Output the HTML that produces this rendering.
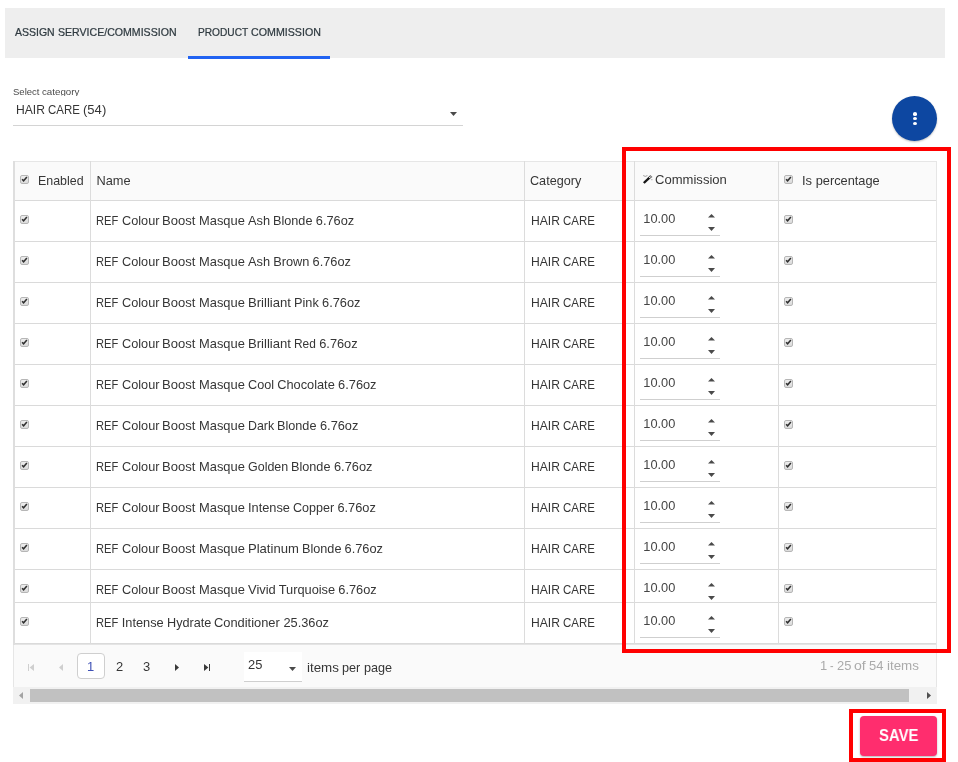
<!DOCTYPE html>
<html><head><meta charset="utf-8"><title>Product Commission</title>
<style>
html,body{margin:0;padding:0;background:#fff;}
#w{position:absolute;left:0;top:0;width:958px;height:762px;will-change:transform;}
body{width:958px;height:762px;overflow:hidden;position:relative;font-family:"Liberation Sans",sans-serif;font-size:13px;color:#363636;}
.a{position:absolute;}
.t{position:absolute;white-space:pre;line-height:16px;height:16px;font-size:12.8px;}
.w{position:absolute;top:0;transform-origin:0 0;}
.tabbar{left:5px;top:8px;width:940px;height:50px;background:#eeeeee;}
.tab{font-size:11px;font-weight:normal;color:#2f3a40;top:24px;-webkit-text-stroke:0.24px #2f3a40;}
.ink{left:188px;top:56px;width:142px;height:3px;background:#2163f2;}
.hl{background:#dadada;height:1px;}
.vl{background:#dcdcdc;width:1px;}
.cb{position:absolute;width:7px;height:7px;border:1px solid #b6b6b6;border-radius:2px;background:linear-gradient(#ededed,#dbdbdb);}
.cb svg{position:absolute;left:0;top:0;width:7px;height:7px;overflow:visible;}
.row{position:absolute;left:14px;width:922px;height:41px;overflow:hidden;}
.ul{position:absolute;left:626px;top:35px;width:80px;height:1px;background:#cfcfcf;}
.up{position:absolute;left:694px;top:14px;width:7px;height:3.5px;}
.dn{position:absolute;left:694px;top:27px;width:7px;height:4px;}
.red{position:absolute;border:4px solid #ff0000;box-sizing:border-box;}
</style></head>
<body>
<div id="w">
<div class="a tabbar"></div>
<span class="t tab" style="left:15.2px;top:24px;font-size:11.2px;"><span class="w" style="left:0.00px;transform:scaleX(0.9390)">ASSIGN </span><span class="w" style="left:42.48px;transform:scaleX(0.9454)">SERVICE/COMMISSION</span></span>
<span class="t tab" style="left:197.8px;top:24px;font-size:11.17px;"><span class="w" style="left:0.00px;transform:scaleX(0.9110)">PRODUCT </span><span class="w" style="left:52.86px;transform:scaleX(0.9560)">COMMISSION</span></span>
<div class="a ink"></div>
<div class="a" style="left:13px;top:84px;width:80px;height:12px;overflow:hidden"><span class="t" style="left:0px;top:2px;font-size:9.63px;line-height:12px;color:#4a4a4a;"><span class="w" style="left:0.00px;transform:scaleX(0.9883)">Select </span><span class="w" style="left:28.84px;transform:scaleX(1.0110)">category</span></span></div>
<span class="t" style="left:16.3px;top:102px;"><span class="w" style="left:0.00px;transform:scaleX(0.9474)">HAIR </span><span class="w" style="left:32.16px;transform:scaleX(0.8954)">CARE </span><span class="w" style="left:67.19px;transform:scaleX(1.0206)">(54)</span></span>
<div class="a" style="left:13px;top:125px;width:450px;height:1px;background:#d4d4d4"></div>
<svg class="a" style="left:450px;top:112px;width:7px;height:4px" viewBox="0 0 7 4"><path d="M0 0 L7 0 L3.5 4 Z" fill="#4a4a4a"/></svg>
<div class="a" style="left:892px;top:96px;width:45px;height:45px;border-radius:50%;background:#0d47a1;box-shadow:0 1px 2px rgba(0,0,0,0.25)"></div>
<div class="a" style="left:912.7px;top:112.35px;width:4.2px;height:3.3px;border-radius:50%;background:#fff"></div>
<div class="a" style="left:912.7px;top:117.05px;width:4.2px;height:3.3px;border-radius:50%;background:#fff"></div>
<div class="a" style="left:912.7px;top:121.75px;width:4.2px;height:3.3px;border-radius:50%;background:#fff"></div>
<div class="a" style="left:13px;top:161px;width:924px;height:543px;background:#fff"></div>
<div class="a" style="left:14px;top:162px;width:922px;height:38px;background:#fafafa"></div>
<div class="a" style="left:14px;top:644px;width:922px;height:43px;background:#fafafa"></div>
<div class="row" style="top:200px;height:41px"><span class="cb" style="left:6px;top:15px"><svg viewBox="0 0 7 7"><path d="M1.1 3.2 L2.6 4.8 L5.9 1.1" fill="none" stroke="#303030" stroke-width="1.55"/></svg></span><span class="t" style="left:82.3px;top:13px;"><span class="w" style="left:0.00px;transform:scaleX(0.8682)">REF </span><span class="w" style="left:25.42px;transform:scaleX(0.9930)">Colour </span><span class="w" style="left:66.05px;transform:scaleX(1.0196)">Boost </span><span class="w" style="left:102.61px;transform:scaleX(1.0072)">Masque </span><span class="w" style="left:151.66px">Ash </span><span class="w" style="left:176.86px;transform:scaleX(0.9898)">Blonde </span><span class="w" style="left:219.50px">6.76oz</span></span><span class="t" style="left:516.5px;top:13px;"><span class="w" style="left:0.00px;transform:scaleX(0.9474)">HAIR </span><span class="w" style="left:32.16px;transform:scaleX(0.8954)">CARE</span></span><span class="t" style="left:629.3px;top:11px;color:#454545;"><span class="w" style="left:0.00px">10.00</span></span><i class="ul"></i><svg class="up" viewBox="0 0 7 4" preserveAspectRatio="none"><path d="M0 4 L3.5 0 L7 4 Z" fill="#4a4a4a"/></svg><svg class="dn" viewBox="0 0 7 4"><path d="M0 0 L7 0 L3.5 4 Z" fill="#4a4a4a"/></svg><span class="cb" style="left:770px;top:15px"><svg viewBox="0 0 7 7"><path d="M1.1 3.2 L2.6 4.8 L5.9 1.1" fill="none" stroke="#303030" stroke-width="1.55"/></svg></span></div>
<div class="row" style="top:241px;height:41px"><span class="cb" style="left:6px;top:15px"><svg viewBox="0 0 7 7"><path d="M1.1 3.2 L2.6 4.8 L5.9 1.1" fill="none" stroke="#303030" stroke-width="1.55"/></svg></span><span class="t" style="left:82.3px;top:13px;"><span class="w" style="left:0.00px;transform:scaleX(0.8682)">REF </span><span class="w" style="left:25.42px;transform:scaleX(0.9930)">Colour </span><span class="w" style="left:66.05px;transform:scaleX(1.0196)">Boost </span><span class="w" style="left:102.61px;transform:scaleX(1.0072)">Masque </span><span class="w" style="left:151.66px">Ash </span><span class="w" style="left:176.86px">Brown </span><span class="w" style="left:216.22px">6.76oz</span></span><span class="t" style="left:516.5px;top:13px;"><span class="w" style="left:0.00px;transform:scaleX(0.9474)">HAIR </span><span class="w" style="left:32.16px;transform:scaleX(0.8954)">CARE</span></span><span class="t" style="left:629.3px;top:11px;color:#454545;"><span class="w" style="left:0.00px">10.00</span></span><i class="ul"></i><svg class="up" viewBox="0 0 7 4" preserveAspectRatio="none"><path d="M0 4 L3.5 0 L7 4 Z" fill="#4a4a4a"/></svg><svg class="dn" viewBox="0 0 7 4"><path d="M0 0 L7 0 L3.5 4 Z" fill="#4a4a4a"/></svg><span class="cb" style="left:770px;top:15px"><svg viewBox="0 0 7 7"><path d="M1.1 3.2 L2.6 4.8 L5.9 1.1" fill="none" stroke="#303030" stroke-width="1.55"/></svg></span></div>
<div class="row" style="top:282px;height:41px"><span class="cb" style="left:6px;top:15px"><svg viewBox="0 0 7 7"><path d="M1.1 3.2 L2.6 4.8 L5.9 1.1" fill="none" stroke="#303030" stroke-width="1.55"/></svg></span><span class="t" style="left:82.3px;top:13px;"><span class="w" style="left:0.00px;transform:scaleX(0.8682)">REF </span><span class="w" style="left:25.42px;transform:scaleX(0.9930)">Colour </span><span class="w" style="left:66.05px;transform:scaleX(1.0196)">Boost </span><span class="w" style="left:102.61px;transform:scaleX(1.0072)">Masque </span><span class="w" style="left:151.66px;transform:scaleX(1.0242)">Brilliant </span><span class="w" style="left:197.83px;transform:scaleX(0.9937)">Pink </span><span class="w" style="left:225.77px">6.76oz</span></span><span class="t" style="left:516.5px;top:13px;"><span class="w" style="left:0.00px;transform:scaleX(0.9474)">HAIR </span><span class="w" style="left:32.16px;transform:scaleX(0.8954)">CARE</span></span><span class="t" style="left:629.3px;top:11px;color:#454545;"><span class="w" style="left:0.00px">10.00</span></span><i class="ul"></i><svg class="up" viewBox="0 0 7 4" preserveAspectRatio="none"><path d="M0 4 L3.5 0 L7 4 Z" fill="#4a4a4a"/></svg><svg class="dn" viewBox="0 0 7 4"><path d="M0 0 L7 0 L3.5 4 Z" fill="#4a4a4a"/></svg><span class="cb" style="left:770px;top:15px"><svg viewBox="0 0 7 7"><path d="M1.1 3.2 L2.6 4.8 L5.9 1.1" fill="none" stroke="#303030" stroke-width="1.55"/></svg></span></div>
<div class="row" style="top:323px;height:41px"><span class="cb" style="left:6px;top:15px"><svg viewBox="0 0 7 7"><path d="M1.1 3.2 L2.6 4.8 L5.9 1.1" fill="none" stroke="#303030" stroke-width="1.55"/></svg></span><span class="t" style="left:82.3px;top:13px;"><span class="w" style="left:0.00px;transform:scaleX(0.8682)">REF </span><span class="w" style="left:25.42px;transform:scaleX(0.9930)">Colour </span><span class="w" style="left:66.05px;transform:scaleX(1.0196)">Boost </span><span class="w" style="left:102.61px;transform:scaleX(1.0072)">Masque </span><span class="w" style="left:151.66px;transform:scaleX(1.0242)">Brilliant </span><span class="w" style="left:197.83px;transform:scaleX(0.9321)">Red </span><span class="w" style="left:222.91px">6.76oz</span></span><span class="t" style="left:516.5px;top:13px;"><span class="w" style="left:0.00px;transform:scaleX(0.9474)">HAIR </span><span class="w" style="left:32.16px;transform:scaleX(0.8954)">CARE</span></span><span class="t" style="left:629.3px;top:11px;color:#454545;"><span class="w" style="left:0.00px">10.00</span></span><i class="ul"></i><svg class="up" viewBox="0 0 7 4" preserveAspectRatio="none"><path d="M0 4 L3.5 0 L7 4 Z" fill="#4a4a4a"/></svg><svg class="dn" viewBox="0 0 7 4"><path d="M0 0 L7 0 L3.5 4 Z" fill="#4a4a4a"/></svg><span class="cb" style="left:770px;top:15px"><svg viewBox="0 0 7 7"><path d="M1.1 3.2 L2.6 4.8 L5.9 1.1" fill="none" stroke="#303030" stroke-width="1.55"/></svg></span></div>
<div class="row" style="top:364px;height:41px"><span class="cb" style="left:6px;top:15px"><svg viewBox="0 0 7 7"><path d="M1.1 3.2 L2.6 4.8 L5.9 1.1" fill="none" stroke="#303030" stroke-width="1.55"/></svg></span><span class="t" style="left:82.3px;top:13px;"><span class="w" style="left:0.00px;transform:scaleX(0.8682)">REF </span><span class="w" style="left:25.42px;transform:scaleX(0.9930)">Colour </span><span class="w" style="left:66.05px;transform:scaleX(1.0196)">Boost </span><span class="w" style="left:102.61px;transform:scaleX(1.0072)">Masque </span><span class="w" style="left:151.66px;transform:scaleX(0.9893)">Cool </span><span class="w" style="left:180.89px">Chocolate </span><span class="w" style="left:241.80px">6.76oz</span></span><span class="t" style="left:516.5px;top:13px;"><span class="w" style="left:0.00px;transform:scaleX(0.9474)">HAIR </span><span class="w" style="left:32.16px;transform:scaleX(0.8954)">CARE</span></span><span class="t" style="left:629.3px;top:11px;color:#454545;"><span class="w" style="left:0.00px">10.00</span></span><i class="ul"></i><svg class="up" viewBox="0 0 7 4" preserveAspectRatio="none"><path d="M0 4 L3.5 0 L7 4 Z" fill="#4a4a4a"/></svg><svg class="dn" viewBox="0 0 7 4"><path d="M0 0 L7 0 L3.5 4 Z" fill="#4a4a4a"/></svg><span class="cb" style="left:770px;top:15px"><svg viewBox="0 0 7 7"><path d="M1.1 3.2 L2.6 4.8 L5.9 1.1" fill="none" stroke="#303030" stroke-width="1.55"/></svg></span></div>
<div class="row" style="top:405px;height:41px"><span class="cb" style="left:6px;top:15px"><svg viewBox="0 0 7 7"><path d="M1.1 3.2 L2.6 4.8 L5.9 1.1" fill="none" stroke="#303030" stroke-width="1.55"/></svg></span><span class="t" style="left:82.3px;top:13px;"><span class="w" style="left:0.00px;transform:scaleX(0.8682)">REF </span><span class="w" style="left:25.42px;transform:scaleX(0.9930)">Colour </span><span class="w" style="left:66.05px;transform:scaleX(1.0196)">Boost </span><span class="w" style="left:102.61px;transform:scaleX(1.0072)">Masque </span><span class="w" style="left:151.66px;transform:scaleX(0.9688)">Dark </span><span class="w" style="left:181.03px;transform:scaleX(0.9898)">Blonde </span><span class="w" style="left:223.67px">6.76oz</span></span><span class="t" style="left:516.5px;top:13px;"><span class="w" style="left:0.00px;transform:scaleX(0.9474)">HAIR </span><span class="w" style="left:32.16px;transform:scaleX(0.8954)">CARE</span></span><span class="t" style="left:629.3px;top:11px;color:#454545;"><span class="w" style="left:0.00px">10.00</span></span><i class="ul"></i><svg class="up" viewBox="0 0 7 4" preserveAspectRatio="none"><path d="M0 4 L3.5 0 L7 4 Z" fill="#4a4a4a"/></svg><svg class="dn" viewBox="0 0 7 4"><path d="M0 0 L7 0 L3.5 4 Z" fill="#4a4a4a"/></svg><span class="cb" style="left:770px;top:15px"><svg viewBox="0 0 7 7"><path d="M1.1 3.2 L2.6 4.8 L5.9 1.1" fill="none" stroke="#303030" stroke-width="1.55"/></svg></span></div>
<div class="row" style="top:446px;height:41px"><span class="cb" style="left:6px;top:15px"><svg viewBox="0 0 7 7"><path d="M1.1 3.2 L2.6 4.8 L5.9 1.1" fill="none" stroke="#303030" stroke-width="1.55"/></svg></span><span class="t" style="left:82.3px;top:13px;"><span class="w" style="left:0.00px;transform:scaleX(0.8682)">REF </span><span class="w" style="left:25.42px;transform:scaleX(0.9930)">Colour </span><span class="w" style="left:66.05px;transform:scaleX(1.0196)">Boost </span><span class="w" style="left:102.61px;transform:scaleX(1.0072)">Masque </span><span class="w" style="left:151.66px;transform:scaleX(0.9743)">Golden </span><span class="w" style="left:195.05px;transform:scaleX(0.9898)">Blonde </span><span class="w" style="left:237.69px">6.76oz</span></span><span class="t" style="left:516.5px;top:13px;"><span class="w" style="left:0.00px;transform:scaleX(0.9474)">HAIR </span><span class="w" style="left:32.16px;transform:scaleX(0.8954)">CARE</span></span><span class="t" style="left:629.3px;top:11px;color:#454545;"><span class="w" style="left:0.00px">10.00</span></span><i class="ul"></i><svg class="up" viewBox="0 0 7 4" preserveAspectRatio="none"><path d="M0 4 L3.5 0 L7 4 Z" fill="#4a4a4a"/></svg><svg class="dn" viewBox="0 0 7 4"><path d="M0 0 L7 0 L3.5 4 Z" fill="#4a4a4a"/></svg><span class="cb" style="left:770px;top:15px"><svg viewBox="0 0 7 7"><path d="M1.1 3.2 L2.6 4.8 L5.9 1.1" fill="none" stroke="#303030" stroke-width="1.55"/></svg></span></div>
<div class="row" style="top:487px;height:41px"><span class="cb" style="left:6px;top:15px"><svg viewBox="0 0 7 7"><path d="M1.1 3.2 L2.6 4.8 L5.9 1.1" fill="none" stroke="#303030" stroke-width="1.55"/></svg></span><span class="t" style="left:82.3px;top:13px;"><span class="w" style="left:0.00px;transform:scaleX(0.8682)">REF </span><span class="w" style="left:25.42px;transform:scaleX(0.9930)">Colour </span><span class="w" style="left:66.05px;transform:scaleX(1.0196)">Boost </span><span class="w" style="left:102.61px;transform:scaleX(1.0072)">Masque </span><span class="w" style="left:151.66px">Intense </span><span class="w" style="left:196.83px;transform:scaleX(0.9795)">Copper </span><span class="w" style="left:241.14px">6.76oz</span></span><span class="t" style="left:516.5px;top:13px;"><span class="w" style="left:0.00px;transform:scaleX(0.9474)">HAIR </span><span class="w" style="left:32.16px;transform:scaleX(0.8954)">CARE</span></span><span class="t" style="left:629.3px;top:11px;color:#454545;"><span class="w" style="left:0.00px">10.00</span></span><i class="ul"></i><svg class="up" viewBox="0 0 7 4" preserveAspectRatio="none"><path d="M0 4 L3.5 0 L7 4 Z" fill="#4a4a4a"/></svg><svg class="dn" viewBox="0 0 7 4"><path d="M0 0 L7 0 L3.5 4 Z" fill="#4a4a4a"/></svg><span class="cb" style="left:770px;top:15px"><svg viewBox="0 0 7 7"><path d="M1.1 3.2 L2.6 4.8 L5.9 1.1" fill="none" stroke="#303030" stroke-width="1.55"/></svg></span></div>
<div class="row" style="top:528px;height:41px"><span class="cb" style="left:6px;top:15px"><svg viewBox="0 0 7 7"><path d="M1.1 3.2 L2.6 4.8 L5.9 1.1" fill="none" stroke="#303030" stroke-width="1.55"/></svg></span><span class="t" style="left:82.3px;top:13px;"><span class="w" style="left:0.00px;transform:scaleX(0.8682)">REF </span><span class="w" style="left:25.42px;transform:scaleX(0.9930)">Colour </span><span class="w" style="left:66.05px;transform:scaleX(1.0196)">Boost </span><span class="w" style="left:102.61px;transform:scaleX(1.0072)">Masque </span><span class="w" style="left:151.66px;transform:scaleX(1.0201)">Platinum </span><span class="w" style="left:205.64px;transform:scaleX(0.9898)">Blonde </span><span class="w" style="left:248.28px">6.76oz</span></span><span class="t" style="left:516.5px;top:13px;"><span class="w" style="left:0.00px;transform:scaleX(0.9474)">HAIR </span><span class="w" style="left:32.16px;transform:scaleX(0.8954)">CARE</span></span><span class="t" style="left:629.3px;top:11px;color:#454545;"><span class="w" style="left:0.00px">10.00</span></span><i class="ul"></i><svg class="up" viewBox="0 0 7 4" preserveAspectRatio="none"><path d="M0 4 L3.5 0 L7 4 Z" fill="#4a4a4a"/></svg><svg class="dn" viewBox="0 0 7 4"><path d="M0 0 L7 0 L3.5 4 Z" fill="#4a4a4a"/></svg><span class="cb" style="left:770px;top:15px"><svg viewBox="0 0 7 7"><path d="M1.1 3.2 L2.6 4.8 L5.9 1.1" fill="none" stroke="#303030" stroke-width="1.55"/></svg></span></div>
<div class="row" style="top:569px;height:33px"><span class="cb" style="left:6px;top:15px"><svg viewBox="0 0 7 7"><path d="M1.1 3.2 L2.6 4.8 L5.9 1.1" fill="none" stroke="#303030" stroke-width="1.55"/></svg></span><span class="t" style="left:82.3px;top:13px;"><span class="w" style="left:0.00px;transform:scaleX(0.8682)">REF </span><span class="w" style="left:25.42px;transform:scaleX(0.9930)">Colour </span><span class="w" style="left:66.05px;transform:scaleX(1.0196)">Boost </span><span class="w" style="left:102.61px;transform:scaleX(1.0072)">Masque </span><span class="w" style="left:151.66px;transform:scaleX(1.0102)">Vivid </span><span class="w" style="left:182.39px">Turquoise </span><span class="w" style="left:242.03px">6.76oz</span></span><span class="t" style="left:516.5px;top:13px;"><span class="w" style="left:0.00px;transform:scaleX(0.9474)">HAIR </span><span class="w" style="left:32.16px;transform:scaleX(0.8954)">CARE</span></span><span class="t" style="left:629.3px;top:11px;color:#454545;"><span class="w" style="left:0.00px">10.00</span></span><i class="ul"></i><svg class="up" viewBox="0 0 7 4" preserveAspectRatio="none"><path d="M0 4 L3.5 0 L7 4 Z" fill="#4a4a4a"/></svg><svg class="dn" viewBox="0 0 7 4"><path d="M0 0 L7 0 L3.5 4 Z" fill="#4a4a4a"/></svg><span class="cb" style="left:770px;top:15px"><svg viewBox="0 0 7 7"><path d="M1.1 3.2 L2.6 4.8 L5.9 1.1" fill="none" stroke="#303030" stroke-width="1.55"/></svg></span></div>
<div class="row" style="top:602px;height:41px"><span class="cb" style="left:6px;top:15px"><svg viewBox="0 0 7 7"><path d="M1.1 3.2 L2.6 4.8 L5.9 1.1" fill="none" stroke="#303030" stroke-width="1.55"/></svg></span><span class="t" style="left:82.3px;top:13px;"><span class="w" style="left:0.00px;transform:scaleX(0.8682)">REF </span><span class="w" style="left:25.42px">Intense </span><span class="w" style="left:70.59px;transform:scaleX(0.9895)">Hydrate </span><span class="w" style="left:118.12px;transform:scaleX(1.0055)">Conditioner </span><span class="w" style="left:187.12px">25.36oz</span></span><span class="t" style="left:516.5px;top:13px;"><span class="w" style="left:0.00px;transform:scaleX(0.9474)">HAIR </span><span class="w" style="left:32.16px;transform:scaleX(0.8954)">CARE</span></span><span class="t" style="left:629.3px;top:11px;color:#454545;"><span class="w" style="left:0.00px">10.00</span></span><i class="ul"></i><svg class="up" viewBox="0 0 7 4" preserveAspectRatio="none"><path d="M0 4 L3.5 0 L7 4 Z" fill="#4a4a4a"/></svg><svg class="dn" viewBox="0 0 7 4"><path d="M0 0 L7 0 L3.5 4 Z" fill="#4a4a4a"/></svg><span class="cb" style="left:770px;top:15px"><svg viewBox="0 0 7 7"><path d="M1.1 3.2 L2.6 4.8 L5.9 1.1" fill="none" stroke="#303030" stroke-width="1.55"/></svg></span></div>
<div class="a" style="left:13px;top:161px;width:924px;height:1px;background:#e6e6e6"></div>
<div class="a hl" style="left:13px;top:200px;width:924px"></div>
<div class="a hl" style="left:13px;top:241px;width:924px"></div>
<div class="a hl" style="left:13px;top:282px;width:924px"></div>
<div class="a hl" style="left:13px;top:323px;width:924px"></div>
<div class="a hl" style="left:13px;top:364px;width:924px"></div>
<div class="a hl" style="left:13px;top:405px;width:924px"></div>
<div class="a hl" style="left:13px;top:446px;width:924px"></div>
<div class="a hl" style="left:13px;top:487px;width:924px"></div>
<div class="a hl" style="left:13px;top:528px;width:924px"></div>
<div class="a hl" style="left:13px;top:569px;width:924px"></div>
<div class="a hl" style="left:13px;top:602px;width:924px"></div>
<div class="a hl" style="left:13px;top:643px;width:924px"></div>
<div class="a" style="left:13px;top:644px;width:924px;height:1px;background:#e4e4e4"></div>
<div class="a vl" style="left:90px;top:161px;height:483px"></div>
<div class="a vl" style="left:524px;top:161px;height:483px"></div>
<div class="a vl" style="left:634px;top:161px;height:483px"></div>
<div class="a vl" style="left:778px;top:161px;height:483px"></div>
<div class="a" style="left:13px;top:161px;width:2px;height:484px;background:#dedede"></div><div class="a" style="left:13px;top:645px;width:1px;height:42px;background:#e6e6e6"></div>
<div class="a" style="left:936px;top:161px;width:1px;height:526px;background:#e6e6e6"></div>
<span class="cb" style="left:20px;top:175px"><svg viewBox="0 0 7 7"><path d="M1.1 3.2 L2.6 4.8 L5.9 1.1" fill="none" stroke="#303030" stroke-width="1.55"/></svg></span><span class="t" style="left:38.4px;top:173px;"><span class="w" style="left:0.00px;transform:scaleX(0.9711)">Enabled</span></span>
<span class="t" style="left:96.4px;top:173px;"><span class="w" style="left:0.00px">Name</span></span>
<span class="t" style="left:530.3px;top:173px;"><span class="w" style="left:0.00px;transform:scaleX(0.9871)">Category</span></span>
<svg class="a" style="left:642px;top:174px;width:12px;height:11px" viewBox="0 0 12 11"><path d="M1.8 9 L9.1 2.1" stroke="#161616" stroke-width="2.4" fill="none"/><path d="M7.2 3.9 L8.7 2.5" stroke="#f4f4f4" stroke-width="1.1" fill="none"/><path d="M1.2 1.5 L3.2 2.4 L5.4 1.6" stroke="#7a7a7a" stroke-width="0.7" fill="none"/><path d="M8.9 5.7 L10.6 5.7 M9.4 2.2 L10.4 2.9" stroke="#8a8a8a" stroke-width="0.6" fill="none"/></svg>
<span class="t" style="left:655.1px;top:172px;"><span class="w" style="left:0.00px;transform:scaleX(1.0209)">Commission</span></span>
<span class="cb" style="left:784px;top:175px"><svg viewBox="0 0 7 7"><path d="M1.1 3.2 L2.6 4.8 L5.9 1.1" fill="none" stroke="#303030" stroke-width="1.55"/></svg></span><span class="t" style="left:802.4px;top:173px;"><span class="w" style="left:0.00px;transform:scaleX(1.0125)">Is </span><span class="w" style="left:13.28px">percentage</span></span>
<svg class="a" style="left:28px;top:664px;width:6px;height:7px" viewBox="0 0 6 7"><path d="M0 0 H1 V7 H0 Z M6 0 V7 L1.6 3.5 Z" fill="#cfcfcf"/></svg>
<svg class="a" style="left:59px;top:664px;width:4px;height:7px" viewBox="0 0 4 7"><path d="M4 0 V7 L0 3.5 Z" fill="#cfcfcf"/></svg>
<div class="a" style="left:77px;top:653px;width:28px;height:26px;box-sizing:border-box;border:1px solid #cfcfcf;border-radius:4px;background:#fff"></div>
<span class="t" style="left:87px;top:659px;color:#3f51b5;"><span class="w" style="left:0.00px;transform:scaleX(1.0110)">1</span></span>
<span class="t" style="left:115.5px;top:659px;"><span class="w" style="left:0.00px;transform:scaleX(1.0110)">2</span></span>
<span class="t" style="left:143px;top:659px;"><span class="w" style="left:0.00px;transform:scaleX(1.0110)">3</span></span>
<svg class="a" style="left:175px;top:664px;width:4px;height:7px" viewBox="0 0 4 7"><path d="M0 0 V7 L4 3.5 Z" fill="#3a3a3a"/></svg>
<svg class="a" style="left:204px;top:664px;width:6px;height:7px" viewBox="0 0 6 7"><path d="M5 0 H6 V7 H5 Z M0 0 V7 L4.4 3.5 Z" fill="#3a3a3a"/></svg>
<div class="a" style="left:244px;top:652px;width:58px;height:29px;background:#fff"></div>
<div class="a" style="left:244px;top:681px;width:58px;height:1px;background:#cfcfcf"></div>
<span class="t" style="left:247.9px;top:657px;"><span class="w" style="left:0.00px;transform:scaleX(1.0110)">25</span></span>
<svg class="a" style="left:289px;top:667px;width:7px;height:4px" viewBox="0 0 7 4"><path d="M0 0 L7 0 L3.5 4 Z" fill="#4a4a4a"/></svg>
<span class="t" style="left:307.0px;top:660px;"><span class="w" style="left:0.00px;transform:scaleX(1.0439)">items </span><span class="w" style="left:35.11px;transform:scaleX(0.9899)">per </span><span class="w" style="left:56.61px;transform:scaleX(0.9879)">page</span></span>
<span class="t" style="left:819.8px;top:658px;color:#aaaaaa;"><span class="w" style="left:0.00px;transform:scaleX(1.0110)">1 </span><span class="w" style="left:10.39px;transform:scaleX(0.8315)">- </span><span class="w" style="left:17.12px;transform:scaleX(1.0110)">25 </span><span class="w" style="left:34.70px;transform:scaleX(1.0994)">of </span><span class="w" style="left:49.64px;transform:scaleX(1.0110)">54 </span><span class="w" style="left:67.22px;transform:scaleX(1.0439)">items</span></span>
<div class="a" style="left:13px;top:687px;width:924px;height:17px;background:#f1f1f1"></div>
<div class="a" style="left:30px;top:689px;width:879px;height:13px;background:#c1c1c1"></div>
<svg class="a" style="left:19px;top:692px;width:4px;height:7px" viewBox="0 0 4 7"><path d="M4 0 V7 L0 3.5 Z" fill="#a3a3a3"/></svg>
<svg class="a" style="left:927px;top:692px;width:4px;height:7px" viewBox="0 0 4 7"><path d="M0 0 V7 L4 3.5 Z" fill="#505050"/></svg>
<div class="red" style="left:622px;top:147px;width:329px;height:506px"></div>
<div class="red" style="left:849px;top:709px;width:97px;height:53px"></div>
<div class="a" style="left:860px;top:716px;width:77px;height:40px;border-radius:4px;background:#ff2d6e;box-shadow:0 1px 2px rgba(0,0,0,0.3)"></div>
<span class="t" style="left:879px;top:725px;font-size:16.2px;font-weight:bold;color:#fff;line-height:20px;height:20px;"><span class="w" style="left:0.00px;transform:scaleX(0.9206)">SAVE</span></span>
</div>
</body></html>
